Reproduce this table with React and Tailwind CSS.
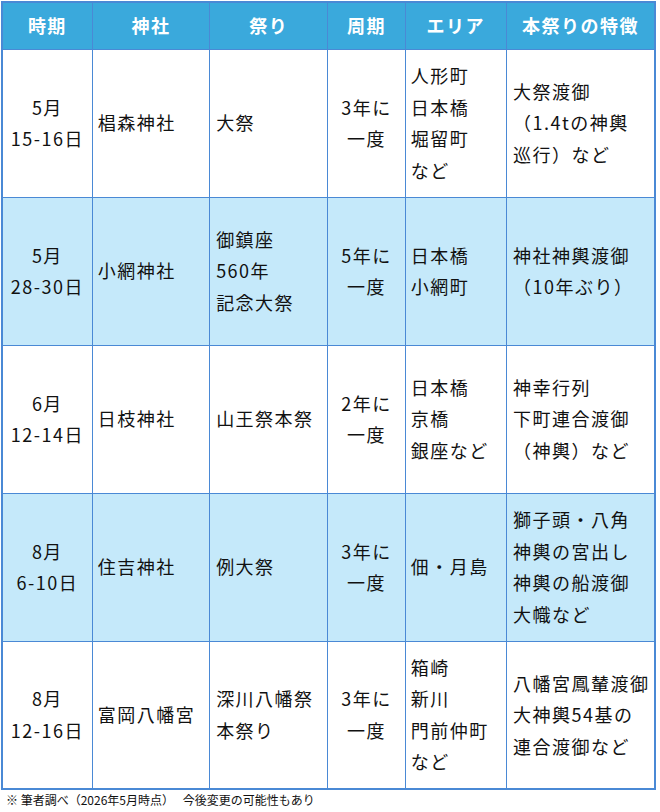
const rows = [
  { date: ["5月", "15-16日"], shrine: ["椙森神社"], fest: ["大祭"], cycle: ["3年に", "一度"], area: ["人形町", "日本橋", "堀留町", "など"], feat: ["大祭渡御", "（1.4tの神輿", "巡行）など"] },
  { date: ["5月", "28-30日"], shrine: ["小網神社"], fest: ["御鎮座", "560年", "記念大祭"], cycle: ["5年に", "一度"], area: ["日本橋", "小網町"], feat: ["神社神輿渡御", "（10年ぶり）"] },
  { date: ["6月", "12-14日"], shrine: ["日枝神社"], fest: ["山王祭本祭"], cycle: ["2年に", "一度"], area: ["日本橋", "京橋", "銀座など"], feat: ["神幸行列", "下町連合渡御", "（神輿）など"] },
  { date: ["8月", "6-10日"], shrine: ["住吉神社"], fest: ["例大祭"], cycle: ["3年に", "一度"], area: ["佃・月島"], feat: ["獅子頭・八角", "神輿の宮出し", "神輿の船渡御", "大幟など"] },
  { date: ["8月", "12-16日"], shrine: ["富岡八幡宮"], fest: ["深川八幡祭", "本祭り"], cycle: ["3年に", "一度"], area: ["箱崎", "新川", "門前仲町", "など"], feat: ["八幡宮鳳輦渡御", "大神輿54基の", "連合渡御など"] },
]

const heads = ["時期", "神社", "祭り", "周期", "エリア", "本祭りの特徴"]
const widths = ["w-[90px]", "w-[117px]", "w-[118px]", "w-[77px]", "w-[101px]", "w-[148px]"]

const Lines = ({ items }) => items.map((t, i) => <div key={i} className="whitespace-nowrap">{t}</div>)

export default function App() {
  return (
    <div className="bg-white w-[660px] h-[812px] pt-px pl-px font-['Noto_Sans_CJK_JP',sans-serif] text-[#111]">
      <table className="table-fixed border-collapse border-2 border-[#4a89d5] w-[655px]">
        <thead>
          <tr className="bg-[#3aa9dc] text-white">
            {heads.map((h, i) => (
              <th key={h} className={`${widths[i]} h-[47px] border border-[#4a89d5] text-[18px] tracking-[1.5px] font-bold text-center p-0`}>{h}</th>
            ))}
          </tr>
        </thead>
        <tbody className="text-[18px] tracking-[1.5px] leading-[31.5px]">
          {rows.map((r, i) => (
            <tr key={i} className={i % 2 === 1 ? "bg-[#c5e9fa]" : "bg-white"}>
              <td className="h-[148px] border border-[#4a89d5] text-center align-middle p-0"><Lines items={r.date} /></td>
              <td className="border border-[#4a89d5] align-middle pl-[5px]"><Lines items={r.shrine} /></td>
              <td className="border border-[#4a89d5] align-middle pl-[6px]"><Lines items={r.fest} /></td>
              <td className="border border-[#4a89d5] text-center align-middle p-0"><Lines items={r.cycle} /></td>
              <td className="border border-[#4a89d5] align-middle pl-[5px]"><Lines items={r.area} /></td>
              <td className="border border-[#4a89d5] align-middle pl-[6px]"><Lines items={r.feat} /></td>
            </tr>
          ))}
        </tbody>
      </table>
      <p className="text-[12px] leading-[18px] pl-[5px] pt-[1px] text-[#111]">※ 筆者調べ（2026年5月時点）　 今後変更の可能性もあり</p>
    </div>
  )
}
